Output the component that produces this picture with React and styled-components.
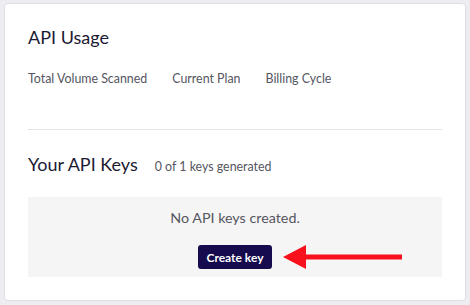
import styled, { createGlobalStyle } from "styled-components";

const GlobalStyle = createGlobalStyle`
  html, body {
    margin: 0;
    padding: 0;
    background: #ededf1;
  }
  body {
    font-family: "Lato", "Liberation Sans", sans-serif;
  }
`;

const Page = styled.div`
  width: 470px;
  height: 305px;
  padding: 3px 4px 4px 4px;
  box-sizing: border-box;
`;

const Card = styled.section`
  width: 462px;
  height: 298px;
  box-sizing: border-box;
  background: #ffffff;
  border: 1px solid #dfdfe7;
  border-radius: 4px;
  padding: 22px 23px 0 23px;
  display: flex;
  flex-direction: column;
`;

const Title = styled.h2`
  margin: 0;
  font-size: 18px;
  font-weight: 400;
  color: #1c1a33;
  line-height: 22px;
`;

const Stats = styled.div`
  display: flex;
  gap: 25px;
  margin-top: 23px;
  font-size: 12.4px;
  color: #555560;
  line-height: 15px;
`;

const Divider = styled.hr`
  border: none;
  border-top: 1px solid #e4e4e8;
  margin: 43px 0 0 0;
`;

const KeysHeader = styled.div`
  display: flex;
  align-items: baseline;
  gap: 17px;
  margin-top: 23px;
`;

const Count = styled.span`
  font-size: 12.4px;
  color: #555560;
`;

const Empty = styled.div`
  margin-top: 22px;
  height: 80px;
  background: #f5f5f5;
  display: flex;
  flex-direction: column;
  align-items: center;
  padding-top: 12px;
  box-sizing: border-box;
`;

const EmptyText = styled.p`
  margin: 0;
  font-size: 14.3px;
  color: #55555f;
  line-height: 17px;
`;

const ButtonRow = styled.div`
  margin-top: 19px;
  display: flex;
  align-items: center;
  position: relative;
`;

const Button = styled.button`
  height: 24px;
  width: 74px;
  border: none;
  border-radius: 3px;
  background: #150b4d;
  color: #ffffff;
  font-family: "Lato", "Liberation Sans", sans-serif;
  font-weight: 700;
  font-size: 12px;
  padding: 0;
`;

const Arrow = styled.svg`
  position: absolute;
  left: 84px;
  top: 0;
`;

export default function App() {
  return (
    <>
      <GlobalStyle />
      <Page>
        <Card>
          <Title>API Usage</Title>
          <Stats>
            <span>Total Volume Scanned</span>
            <span>Current Plan</span>
            <span>Billing Cycle</span>
          </Stats>
          <Divider />
          <KeysHeader>
            <Title>Your API Keys</Title>
            <Count>0 of 1 keys generated</Count>
          </KeysHeader>
          <Empty>
            <EmptyText>No API keys created.</EmptyText>
            <ButtonRow>
              <Button>Create key</Button>
              <Arrow width="122" height="24" viewBox="0 0 122 24">
                <polygon points="1,12 24,0 24,9.5 120,9.5 120,14.5 24,14.5 24,24" fill="#f8101c" />
              </Arrow>
            </ButtonRow>
          </Empty>
        </Card>
      </Page>
    </>
  );
}
